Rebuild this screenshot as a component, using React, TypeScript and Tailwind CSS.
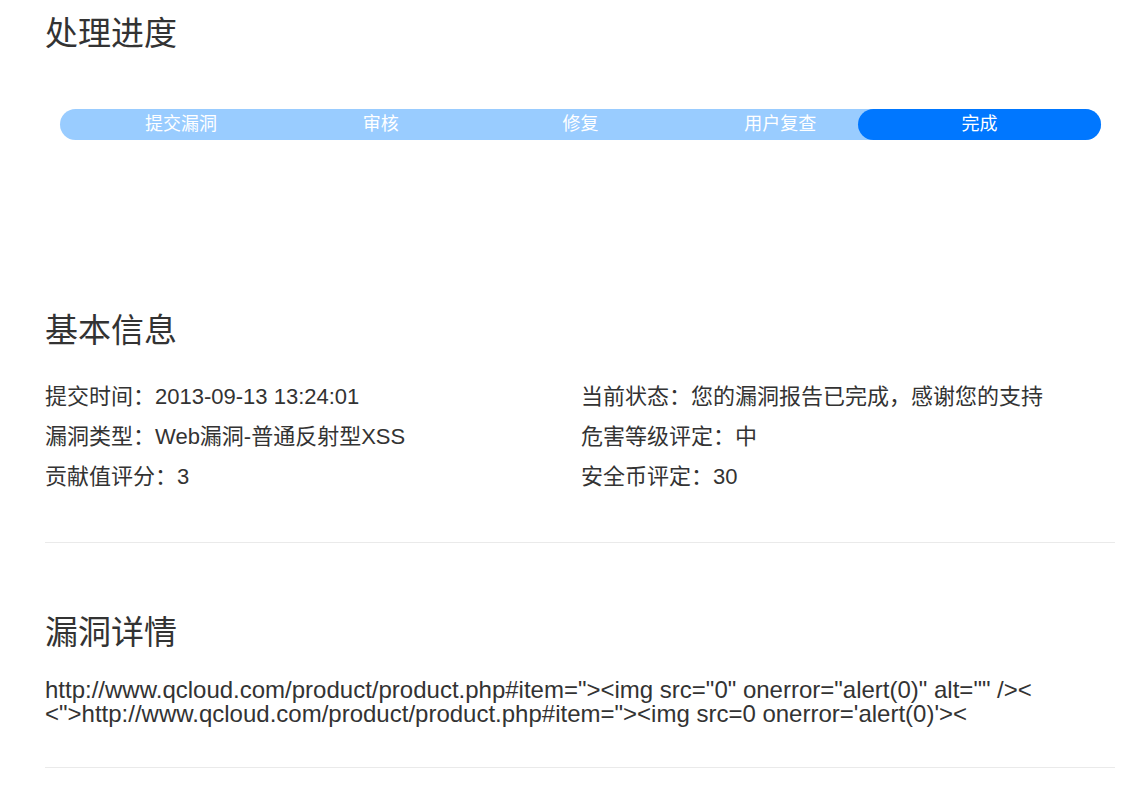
const steps = ["提交漏洞", "审核", "修复", "用户复查", "完成"];
const current = 4;

const font = { fontFamily: '"Liberation Sans", "Noto Sans CJK SC", sans-serif' };

function Info({ label, value }: { label: string; value: string }) {
  return (
    <p className="h-10 leading-10">
      {label}：{value}
    </p>
  );
}

export default function App() {
  return (
    <div className="min-h-screen bg-white text-[#333]" style={font}>
      <div className="w-[1070px] ml-[45px]">
        <h2 className="pt-[14px] text-[33px] leading-[40px] font-normal">处理进度</h2>

        <div className="mt-[55px] ml-[15px] w-[1041px] h-[31px] rounded-full bg-[#99ccff] px-[21px] grid grid-cols-5">
          {steps.map((s, i) => (
            <div
              key={s}
              className={
                i === current
                  ? "-ml-[22px] -mr-[21px] h-[31px] rounded-full bg-[#0077ff] text-white text-[18px] leading-[31px] text-center"
                  : "h-[31px] text-white text-[18px] leading-[31px] text-center"
              }
            >
              {s}
            </div>
          ))}
        </div>

        <h2 className="mt-[171px] text-[33px] leading-[40px] font-normal">基本信息</h2>
        <div className="mt-[26px] grid grid-cols-2 text-[22px]">
          <div>
            <Info label="提交时间" value="2013-09-13 13:24:01" />
            <Info label="漏洞类型" value="Web漏洞-普通反射型XSS" />
            <Info label="贡献值评分" value="3" />
          </div>
          <div className="pl-[1px]">
            <Info label="当前状态" value="您的漏洞报告已完成，感谢您的支持" />
            <Info label="危害等级评定" value="中" />
            <Info label="安全币评定" value="30" />
          </div>
        </div>
        <div className="mt-[45px] h-px bg-[#eaeaea]" />

        <h2 className="mt-[70px] text-[33px] leading-[40px] font-normal">漏洞详情</h2>
        <p className="mt-[25px] text-[24px] leading-[24px] break-all">
          {'http://www.qcloud.com/product/product.php#item="><img src="0" onerror="alert(0)" alt="" /><'}
          <br />
          {'<">http://www.qcloud.com/product/product.php#item="><img src=0 onerror=\'alert(0)\'><'}
        </p>
        <div className="mt-[41px] h-px bg-[#eaeaea]" />
      </div>
    </div>
  );
}
